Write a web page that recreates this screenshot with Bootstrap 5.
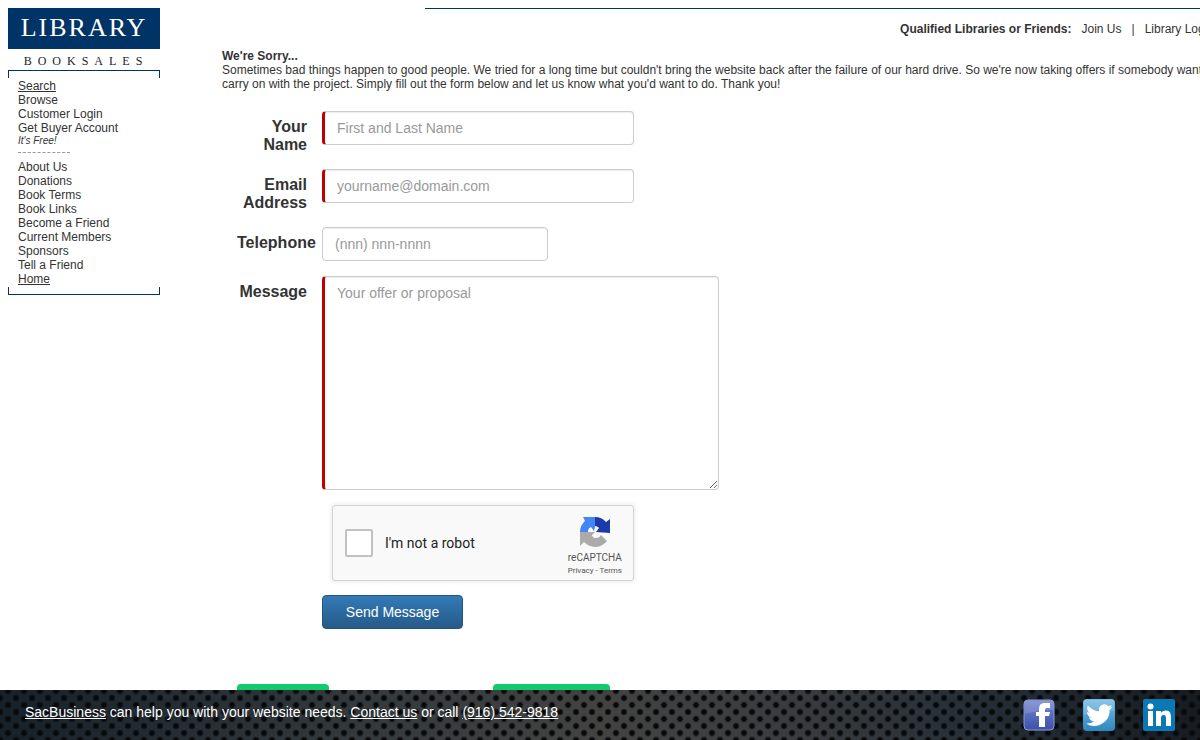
<!DOCTYPE html>
<html lang="en">
<head>
<meta charset="utf-8">
<meta name="viewport" content="width=device-width, initial-scale=1">
<title>Library Booksales</title>
<link href="https://cdn.jsdelivr.net/npm/bootstrap@5.3.0/dist/css/bootstrap.min.css" rel="stylesheet">
<style>
  body { font-family: "Liberation Sans", Arial, sans-serif; font-size: 12px; line-height: 14px; color: #333; overflow-x: hidden; }
  .side { width: 152px; }
  .side a, .top-links a { color: #333; text-decoration: none; }
  .side a.current { text-decoration: underline; }
  .logo-name { background: #036; color: #fff; font: 26px/40px "Liberation Serif", serif; letter-spacing: 2px; padding-bottom: 1px; }
  .logo-sub { font: 12px/17px "Liberation Serif", serif; letter-spacing: 6px; padding: 4px 0 0 4px; color: #222; }
  .bracket { height: 8px; border: 1px solid #036; }
  .bracket-top { border-bottom: 0; }
  .bracket-bottom { border-top: 0; }
  .side-nav { padding: 1px 10px; }
  .free { font-size: 10px; line-height: 12px; }
  .dashes { width: 52px; height: 14px; border-top: 1px dashed #999; margin-top: 5px; margin-bottom: -6px; }
  .content-area { margin-left: 62px; margin-right: -40px; min-width: 0; }
  .top-links { border-top: 1px solid #036; margin-left: 203px; padding-top: 13px; height: 41px; gap: 10px; padding-right: 18px; }
  .offer-form { padding-top: 20px; }
  .offer-row { display: flex; margin-bottom: 15px; }
  .offer-label { width: 100px; flex: none; padding: 7px 15px 0; font-size: 16px; line-height: 18px; font-weight: 700; text-align: right; }
  .offer-row .form-control { height: 34px; padding: 6px 12px; font-size: 14px; line-height: 20px; border-color: #ccc; border-radius: 4px; box-shadow: inset 0 1px 1px rgba(0,0,0,.075); }
  .offer-row .form-control::placeholder { color: #999; }
  .offer-row .form-control:required { border-left: 3px solid #c00000; }
  .offer-row .wide { max-width: 312px; }
  .offer-row .short { max-width: 226px; }
  .offer-row textarea.form-control { max-width: 397px; height: 214px; }
  .under-fields { margin-left: 100px; }
  .captcha { margin-left: 10px; width: 302px; height: 76px; padding: 0 11px 0 12px; background: #f9f9f9; border: 1px solid #d3d3d3; border-radius: 3px; box-shadow: 0 0 4px 1px rgba(0,0,0,.08); font-family: Roboto, sans-serif; }
  .captcha .form-check-input { width: 28px; height: 28px; margin: 0 12px 0 0; border: 2px solid #c1c1c1; border-radius: 2px; }
  .captcha label { font-size: 14px; color: #222; }
  .captcha-brand { font-size: 10px; line-height: 12px; color: #555; padding-top: 10px; }
  .captcha-brand svg { margin-bottom: 4px; }
  .captcha-brand a { color: #555; text-decoration: none; }
  .captcha-terms { font-size: 8px; line-height: 13px; }
  .btn-send { margin-top: 14px; width: 141px; height: 34px; padding: 0; font-size: 14px; line-height: 20px; color: #fff; border: 1px solid #245580; border-radius: 4px; background: linear-gradient(#337ab7, #265a88); }
  .btn-send:hover { color: #fff; background: #265a88; }
  .tabs-below { margin-top: 55px; padding-left: 15px; gap: 164px; }
  .tab-edge { height: 34px; border-radius: 4px; background: #0fcb6c; }
  .tab-a { width: 92px; }
  .tab-b { width: 117px; }
  .site-foot { height: 50px; padding: 0 25px; font-size: 14px; line-height: 20px; color: #fff;
    background:
      radial-gradient(circle at 8px 7px, #08090a 2px, rgba(8,9,10,.4) 3px, transparent 4px) 8px 1px / 16px 14px,
      radial-gradient(circle at 8px 7px, #08090a 2px, rgba(8,9,10,.4) 3px, transparent 4px) 0 8px / 16px 14px,
      linear-gradient(90deg, #17212a, #30373b 26%, #434342 50%, #393c3f 66%, #252e36 82%, #171c21); }
  .site-foot a { color: #fff; text-decoration: underline; }
  .site-foot p { margin: 0 0 6px; }
  .social { gap: 28px; }
</style>
</head>
<body>
<div class="d-flex p-2">
  <aside class="side flex-shrink-0">
    <div class="logo-name text-center">LIBRARY</div>
    <div class="logo-sub text-center">BOOKSALES</div>
    <div class="bracket bracket-top"></div>
    <nav class="side-nav d-flex flex-column align-items-start">
      <a class="current" href="#">Search</a>
      <a href="#">Browse</a>
      <a href="#">Customer Login</a>
      <a href="#">Get Buyer Account</a>
      <em class="free">It's Free!</em>
      <div class="dashes"></div>
      <a href="#">About Us</a>
      <a href="#">Donations</a>
      <a href="#">Book Terms</a>
      <a href="#">Book Links</a>
      <a href="#">Become a Friend</a>
      <a href="#">Current Members</a>
      <a href="#">Sponsors</a>
      <a href="#">Tell a Friend</a>
      <a class="current" href="#">Home</a>
    </nav>
    <div class="bracket bracket-bottom"></div>
  </aside>

  <main class="content-area flex-grow-1">
    <div class="top-links d-flex justify-content-end text-nowrap">
      <strong>Qualified Libraries or Friends:</strong>
      <a href="#">Join Us</a><span>|</span><a href="#">Library Login</a>
    </div>
    <strong>We're Sorry...</strong>
    <p class="m-0">Sometimes bad things happen to good people. We tried for a long time but couldn't bring the website back after the failure of our hard drive. So we're now taking offers if somebody wants to carry on with the project. Simply fill out the form below and let us know what you'd want to do. Thank you!</p>

    <form class="offer-form">
      <div class="offer-row">
        <label class="offer-label" for="name">Your Name</label>
        <input class="form-control wide" id="name" type="text" placeholder="First and Last Name" required>
      </div>
      <div class="offer-row">
        <label class="offer-label" for="email">Email Address</label>
        <input class="form-control wide" id="email" type="email" placeholder="yourname@domain.com" required>
      </div>
      <div class="offer-row">
        <label class="offer-label" for="phone">Telephone</label>
        <input class="form-control short" id="phone" type="tel" placeholder="(nnn) nnn-nnnn">
      </div>
      <div class="offer-row">
        <label class="offer-label" for="message">Message</label>
        <textarea class="form-control" id="message" placeholder="Your offer or proposal" required></textarea>
      </div>
      <div class="under-fields">
        <div class="captcha d-flex">
          <div class="d-flex align-items-center me-auto">
            <input class="form-check-input" id="robot" type="checkbox">
            <label for="robot">I'm not a robot</label>
          </div>
          <div class="captcha-brand text-center">
            <svg class="d-block mx-auto" width="32" height="32" viewBox="0 0 32 32" aria-hidden="true">
              <path fill="#1c3aa9" d="M31 17V3l-4 3A15 15 0 0 0 16 1v9c2 0 3 1 4 2l-3 4z"/>
              <path fill="#4285f4" d="M16 1H4l2 4A15 15 0 0 0 1 16h8c0-3 1-4 3-5l3 4 1-4z"/>
              <path fill="#ababab" d="M1 16v14l4-4a15 15 0 0 0 23-1l-6-6c-1 2-3 3-5 3-3 0-4-2-4-3l3-3z"/>
            </svg>
            <div>reCAPTCHA</div>
            <div class="captcha-terms"><a href="#">Privacy</a> - <a href="#">Terms</a></div>
          </div>
        </div>
        <button class="btn btn-send" type="submit">Send Message</button>
      </div>
    </form>
    <div class="tabs-below d-flex" aria-hidden="true">
      <div class="tab-edge tab-a"></div>
      <div class="tab-edge tab-b"></div>
    </div>
  </main>
</div>

<footer class="site-foot fixed-bottom d-flex align-items-center justify-content-between">
  <p><a href="#">SacBusiness</a> can help you with your website needs. <a href="#">Contact us</a> or call <a href="#">(916) 542-9818</a></p>
  <div class="social d-flex">
    <a href="#" aria-label="Facebook"><svg class="d-block" width="32" height="32" viewBox="0 0 32 32">
      <defs><linearGradient id="fb" x2="0" y2="1"><stop stop-color="#7686cf"/><stop offset="1" stop-color="#3c50a8"/></linearGradient></defs>
      <rect x="1" y="1" width="30" height="30" rx="4" fill="url(#fb)" stroke="#8b9bdc"/>
      <path fill="#fff" fill-opacity=".15" d="M2 2h28v9Q16 11 2 15z"/>
      <path fill="#fff" d="M16 28V17h-3v-4h3v-3c0-4 2-6 6-6h5v5h-3c-2 0-2 1-2 2v2h5l-1 4h-4v11z"/></svg></a>
    <a href="#" aria-label="Twitter"><svg class="d-block" width="32" height="32" viewBox="0 0 32 32">
      <defs><linearGradient id="tw" x2="0" y2="1"><stop stop-color="#75bce5"/><stop offset="1" stop-color="#2f87c0"/></linearGradient></defs>
      <rect width="32" height="32" rx="4" fill="url(#tw)"/>
      <path fill="#fff" fill-opacity=".15" d="M1 1h30v11Q16 11 1 16z"/>
      <g transform="translate(3 3) scale(1.1)"><path fill="#fff" d="M24 4.600a10 10 0 0 1-2.800.8 5 5 0 0 0 2.200-2.700c-1 .6-2 1-3.100 1.200a4.900 4.900 0 0 0-8.400 4.500A14 14 0 0 1 1.700 3.200a4.900 4.900 0 0 0 1.500 6.500 5 5 0 0 1-2.200-.6 4.900 4.900 0 0 0 3.900 4.900 5 5 0 0 1-2.200.1 4.900 4.900 0 0 0 4.600 3.400A10 10 0 0 1 0 19.500a14 14 0 0 0 21.500-12.400A10 10 0 0 0 24 4.600z"/></g></svg></a>
    <a href="#" aria-label="LinkedIn"><svg class="d-block" width="32" height="32" viewBox="0 0 32 32">
      <rect width="32" height="32" rx="2" fill="#0a78b5"/>
      <circle cx="7.500" cy="7.500" r="3" fill="#fff"/>
      <path fill="#fff" d="M5 12h5v15H5zM13 12h5v2c1-1.500 2.500-2.500 5-2.500 4 0 5 3 5 7V27h-5v-7.500c0-2-.5-3.500-2.400-3.500-2 0-2.600 1.500-2.600 3.500V27h-5z"/></svg></a>
  </div>
</footer>
<script src="https://cdn.jsdelivr.net/npm/bootstrap@5.3.0/dist/js/bootstrap.bundle.min.js"></script>
</body>
</html>
